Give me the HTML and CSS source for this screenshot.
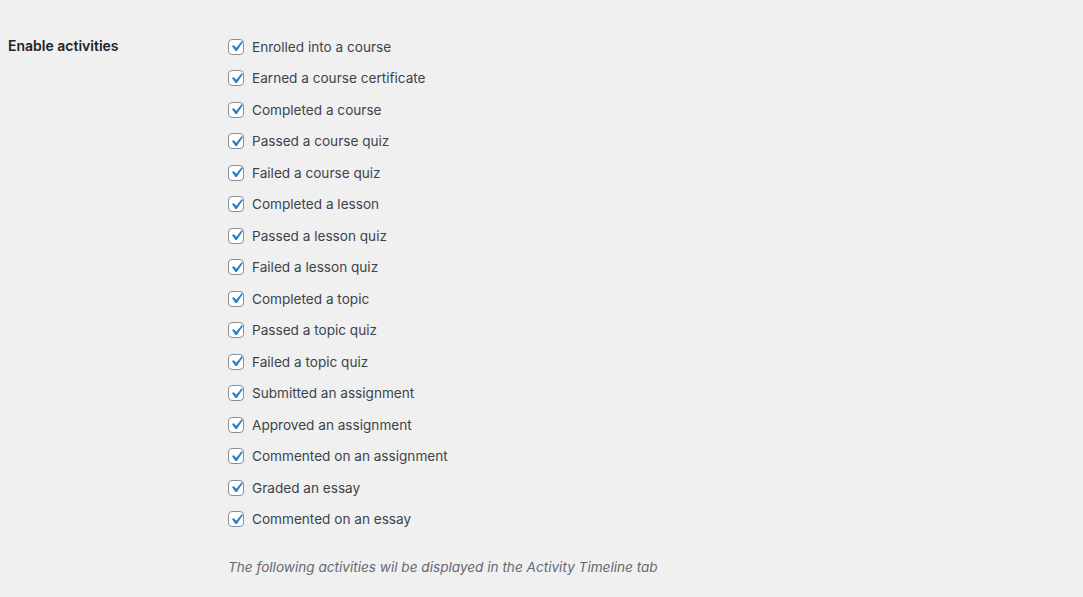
FILE: index.html
```html
<!DOCTYPE html>
<html lang="en">
<head>
<meta charset="utf-8">
<title>Enable activities</title>
<link rel="stylesheet" href="styles.css">
</head>
<body>
<div class="form-row">
  <div class="row-label">Enable activities</div>
  <div class="row-field">
    <ul class="checklist">
      <li class="check-item"><span class="box"><svg viewBox="0 0 20 20"><path d="M14.83 4.89l1.34.94-5.81 8.38H9.02L5.78 9.67l1.34-1.12 2.74 2.57z"/></svg></span><span class="check-text">Enrolled into a course</span></li>
      <li class="check-item"><span class="box"><svg viewBox="0 0 20 20"><path d="M14.83 4.89l1.34.94-5.81 8.38H9.02L5.78 9.67l1.34-1.12 2.74 2.57z"/></svg></span><span class="check-text">Earned a course certificate</span></li>
      <li class="check-item"><span class="box"><svg viewBox="0 0 20 20"><path d="M14.83 4.89l1.34.94-5.81 8.38H9.02L5.78 9.67l1.34-1.12 2.74 2.57z"/></svg></span><span class="check-text">Completed a course</span></li>
      <li class="check-item"><span class="box"><svg viewBox="0 0 20 20"><path d="M14.83 4.89l1.34.94-5.81 8.38H9.02L5.78 9.67l1.34-1.12 2.74 2.57z"/></svg></span><span class="check-text">Passed a course quiz</span></li>
      <li class="check-item"><span class="box"><svg viewBox="0 0 20 20"><path d="M14.83 4.89l1.34.94-5.81 8.38H9.02L5.78 9.67l1.34-1.12 2.74 2.57z"/></svg></span><span class="check-text">Failed a course quiz</span></li>
      <li class="check-item"><span class="box"><svg viewBox="0 0 20 20"><path d="M14.83 4.89l1.34.94-5.81 8.38H9.02L5.78 9.67l1.34-1.12 2.74 2.57z"/></svg></span><span class="check-text">Completed a lesson</span></li>
      <li class="check-item"><span class="box"><svg viewBox="0 0 20 20"><path d="M14.83 4.89l1.34.94-5.81 8.38H9.02L5.78 9.67l1.34-1.12 2.74 2.57z"/></svg></span><span class="check-text">Passed a lesson quiz</span></li>
      <li class="check-item"><span class="box"><svg viewBox="0 0 20 20"><path d="M14.83 4.89l1.34.94-5.81 8.38H9.02L5.78 9.67l1.34-1.12 2.74 2.57z"/></svg></span><span class="check-text">Failed a lesson quiz</span></li>
      <li class="check-item"><span class="box"><svg viewBox="0 0 20 20"><path d="M14.83 4.89l1.34.94-5.81 8.38H9.02L5.78 9.67l1.34-1.12 2.74 2.57z"/></svg></span><span class="check-text">Completed a topic</span></li>
      <li class="check-item"><span class="box"><svg viewBox="0 0 20 20"><path d="M14.83 4.89l1.34.94-5.81 8.38H9.02L5.78 9.67l1.34-1.12 2.74 2.57z"/></svg></span><span class="check-text">Passed a topic quiz</span></li>
      <li class="check-item"><span class="box"><svg viewBox="0 0 20 20"><path d="M14.83 4.89l1.34.94-5.81 8.38H9.02L5.78 9.67l1.34-1.12 2.74 2.57z"/></svg></span><span class="check-text">Failed a topic quiz</span></li>
      <li class="check-item"><span class="box"><svg viewBox="0 0 20 20"><path d="M14.83 4.89l1.34.94-5.81 8.38H9.02L5.78 9.67l1.34-1.12 2.74 2.57z"/></svg></span><span class="check-text">Submitted an assignment</span></li>
      <li class="check-item"><span class="box"><svg viewBox="0 0 20 20"><path d="M14.83 4.89l1.34.94-5.81 8.38H9.02L5.78 9.67l1.34-1.12 2.74 2.57z"/></svg></span><span class="check-text">Approved an assignment</span></li>
      <li class="check-item"><span class="box"><svg viewBox="0 0 20 20"><path d="M14.83 4.89l1.34.94-5.81 8.38H9.02L5.78 9.67l1.34-1.12 2.74 2.57z"/></svg></span><span class="check-text">Commented on an assignment</span></li>
      <li class="check-item"><span class="box"><svg viewBox="0 0 20 20"><path d="M14.83 4.89l1.34.94-5.81 8.38H9.02L5.78 9.67l1.34-1.12 2.74 2.57z"/></svg></span><span class="check-text">Graded an essay</span></li>
      <li class="check-item"><span class="box"><svg viewBox="0 0 20 20"><path d="M14.83 4.89l1.34.94-5.81 8.38H9.02L5.78 9.67l1.34-1.12 2.74 2.57z"/></svg></span><span class="check-text">Commented on an essay</span></li>
    </ul>
    <p class="description">The following activities wil be displayed in the Activity Timeline tab</p>
  </div>
</div>
</body>
</html>
```
FILE: styles.css
```css
html, body {
  margin: 0;
  padding: 0;
  background: #f0f0f1;
}
body {
  font-family: Inter, "Liberation Sans", Arial, sans-serif;
  font-size: 13.6px;
  color: #3c434a;
}
.form-row {
  display: grid;
  grid-template-columns: 228px 1fr;
  padding-top: 31px;
}
.row-label {
  padding-left: 8px;
  font-size: 14px;
  font-weight: 600;
  color: #1d2327;
  line-height: 29px;
}
.checklist {
  list-style: none;
  margin: 0;
  padding: 0;
}
.check-item {
  display: flex;
  align-items: center;
  gap: 8px;
  height: 31.5px;
}
.box {
  width: 16px;
  height: 16px;
  box-sizing: border-box;
  border: 1px solid #8c8f94;
  border-radius: 4px;
  background: #fff;
  display: flex;
  align-items: center;
  justify-content: center;
  flex: none;
}
.box svg {
  width: 21px;
  height: 21px;
  fill: #2f7ec0;
  flex: none;
  margin: -3px -4px;
}
.check-text {
  line-height: 20px;
}
.description {
  margin: 0;
  padding-top: 22px;
  font-style: italic;
  color: #646970;
  line-height: 20px;
}
```
